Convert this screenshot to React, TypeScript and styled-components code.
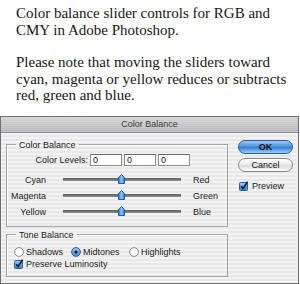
import React from "react";
import styled, { createGlobalStyle } from "styled-components";

const GlobalStyle = createGlobalStyle`
    html, body {
        margin: 0;
        padding: 0;
        background: #ffffff;
    }
`;

const Page = styled.div`
    width: 300px;
    height: 284px;
    overflow: hidden;
    background: #ffffff;
`;

const Intro = styled.div`
    padding: 5px 0 0 16px;
    font-family: "Liberation Serif", "Times New Roman", serif;
    font-size: 15px;
    line-height: 16.5px;
    color: #161616;

    p {
        margin: 0 0 16px;
    }
`;

const Dialog = styled.div`
    box-sizing: border-box;
    width: 299px;
    margin-top: -4px;
    border: 1px solid #6f6f6f;
    border-bottom-width: 2px;
    font-family: "Liberation Sans", Arial, sans-serif;
    font-size: 9px;
    color: #1a1a1a;
`;

const TitleBar = styled.div`
    height: 15px;
    line-height: 15px;
    text-align: center;
    color: #3c3c3c;
    background: repeating-linear-gradient(to bottom, rgba(255, 255, 255, 0.12) 0 1px, rgba(0, 0, 0, 0) 1px 2px),
        linear-gradient(#d4d4d6, #b7b8bb);
    border-bottom: 1px solid #8c8c8c;
`;

const Body = styled.div`
    display: flex;
    padding: 6px 0 6px 5px;
    background: repeating-linear-gradient(to bottom, #f3f3f3 0 2px, #e8e8e8 2px 4px);
`;

const Groups = styled.div`
    display: flex;
    flex-direction: column;
    gap: 2px;
    width: 222px;
`;

const Group = styled.fieldset<{ $pad: number }>`
    margin: 0;
    padding: ${(p) => p.$pad}px 0 6px 0;
    border: 1px solid #a3a3a3;
    box-shadow: inset 1px 1px 0 #ffffff;
    min-width: 0;
`;

const Legend = styled.legend`
    margin-left: 9px;
    padding: 0 3px;
    line-height: 12px;
`;

const LevelsRow = styled.div`
    display: flex;
    align-items: center;
    gap: 2px;
    height: 12px;
    margin-bottom: 6px;
`;

const LevelsLabel = styled.span`
    width: 81px;
    text-align: right;
`;

const LevelInput = styled.div`
    box-sizing: border-box;
    width: 32px;
    height: 12px;
    padding-left: 2px;
    line-height: 10px;
    background: #ffffff;
    border: 1px solid #8e8e8e;
    border-top-color: #6a6a6a;
`;

const SliderRow = styled.div`
    display: grid;
    grid-template-columns: 39px 123px auto;
    column-gap: 12px;
    align-items: center;
    height: 16px;
`;

const SideLabel = styled.span<{ $right?: boolean }>`
    text-align: ${(p) => (p.$right ? "left" : "right")};
`;

const Track = styled.div`
    position: relative;
    height: 3px;
    margin-left: 5px;
    background: linear-gradient(#5c5c5c, #8f8f8f);
`;

const Thumb = styled.svg`
    position: absolute;
    left: 55px;
    top: -4px;
`;

const Row = styled.div`
    display: flex;
    align-items: center;
    height: 12px;
    padding-left: 7px;
`;

const Choice = styled.label<{ $width?: number }>`
    display: flex;
    align-items: center;
    gap: 2px;
    width: ${(p) => (p.$width ? `${p.$width}px` : "auto")};
`;

const Side = styled.div`
    display: flex;
    flex-direction: column;
    align-items: flex-start;
    padding: 1px 0 0 10px;
`;

const PillButton = styled.div<{ $primary?: boolean }>`
    box-sizing: border-box;
    width: 55px;
    height: 14px;
    line-height: 12px;
    margin-bottom: 4px;
    text-align: center;
    border-radius: 7px;
    font-weight: ${(p) => (p.$primary ? 700 : 400)};
    color: #111;
    border: 1px solid ${(p) => (p.$primary ? "#2c5c99" : "#8a8a8a")};
    background: ${(p) =>
        p.$primary
            ? "linear-gradient(#9fcaf2 0%, #4f93dc 45%, #3a7fd0 55%, #9bd0fb 100%)"
            : "linear-gradient(#ffffff 0%, #ececec 45%, #dcdcdc 55%, #fafafa 100%)"};
`;

const PreviewRow = styled.div`
    display: flex;
    align-items: center;
    gap: 3px;
    margin-top: 5px;
    padding-left: 1px;
`;

const CheckBox: React.FC = () => (
    <svg width="10" height="10" viewBox="0 0 10 10">
        <defs>
            <linearGradient id="cb" x1="0" y1="0" x2="0" y2="1">
                <stop offset="0" stopColor="#9cc9f3" />
                <stop offset="1" stopColor="#3d7fd2" />
            </linearGradient>
        </defs>
        <rect x="0.5" y="1.5" width="8" height="8" rx="1" fill="url(#cb)" stroke="#2d5e9a" />
        <path d="M2.2 5.2 L4 7.6 L8.6 0.8" fill="none" stroke="#0d1b33" strokeWidth="1.6" />
    </svg>
);

const Radio: React.FC<{ on?: boolean }> = ({ on }) => (
    <svg width="10" height="10" viewBox="0 0 10 10">
        <defs>
            <radialGradient id="ron" cx="0.5" cy="0.35" r="0.6">
                <stop offset="0" stopColor="#c5e2fb" />
                <stop offset="1" stopColor="#3f84d6" />
            </radialGradient>
            <linearGradient id="roff" x1="0" y1="0" x2="0" y2="1">
                <stop offset="0" stopColor="#f4f4f4" />
                <stop offset="1" stopColor="#ffffff" />
            </linearGradient>
        </defs>
        <circle cx="5" cy="5" r="4.4" fill={on ? "url(#ron)" : "url(#roff)"} stroke={on ? "#2f5f9c" : "#8c8c8c"} />
        {on && <circle cx="5" cy="5" r="1.7" fill="#10203a" />}
    </svg>
);

const SliderThumb: React.FC = () => (
    <Thumb width="7" height="10" viewBox="0 0 7 10">
        <defs>
            <linearGradient id="th" x1="0" y1="0" x2="1" y2="0">
                <stop offset="0" stopColor="#3a78c6" />
                <stop offset="0.5" stopColor="#8ec2f0" />
                <stop offset="1" stopColor="#3a78c6" />
            </linearGradient>
        </defs>
        <path d="M3.5 0.5 L6.5 3.5 L6.5 9.5 L0.5 9.5 L0.5 3.5 Z" fill="url(#th)" stroke="#2d5a90" />
    </Thumb>
);

const sliders = [
    ["Cyan", "Red"],
    ["Magenta", "Green"],
    ["Yellow", "Blue"],
];

export default function App() {
    return (
        <Page>
            <GlobalStyle />
            <Intro>
                <p>
                    Color balance slider controls for RGB and
                    <br />
                    CMY in Adobe Photoshop.
                </p>
                <p>
                    Please note that moving the sliders toward
                    <br />
                    cyan, magenta or yellow reduces or subtracts
                    <br />
                    red, green and blue.
                </p>
            </Intro>
            <Dialog>
                <TitleBar>Color Balance</TitleBar>
                <Body>
                    <Groups>
                        <Group $pad={3}>
                            <Legend>Color Balance</Legend>
                            <LevelsRow>
                                <LevelsLabel>Color Levels:</LevelsLabel>
                                <LevelInput>0</LevelInput>
                                <LevelInput>0</LevelInput>
                                <LevelInput>0</LevelInput>
                            </LevelsRow>
                            {sliders.map(([left, right]) => (
                                <SliderRow key={left}>
                                    <SideLabel>{left}</SideLabel>
                                    <Track>
                                        <SliderThumb />
                                    </Track>
                                    <SideLabel $right>{right}</SideLabel>
                                </SliderRow>
                            ))}
                        </Group>
                        <Group $pad={5}>
                            <Legend>Tone Balance</Legend>
                            <Row>
                                <Choice $width={57}>
                                    <Radio />
                                    Shadows
                                </Choice>
                                <Choice $width={58}>
                                    <Radio on />
                                    Midtones
                                </Choice>
                                <Choice>
                                    <Radio />
                                    Highlights
                                </Choice>
                            </Row>
                            <Row>
                                <Choice>
                                    <CheckBox />
                                    Preserve Luminosity
                                </Choice>
                            </Row>
                        </Group>
                    </Groups>
                    <Side>
                        <PillButton $primary>OK</PillButton>
                        <PillButton>Cancel</PillButton>
                        <PreviewRow>
                            <CheckBox />
                            Preview
                        </PreviewRow>
                    </Side>
                </Body>
            </Dialog>
        </Page>
    );
}
